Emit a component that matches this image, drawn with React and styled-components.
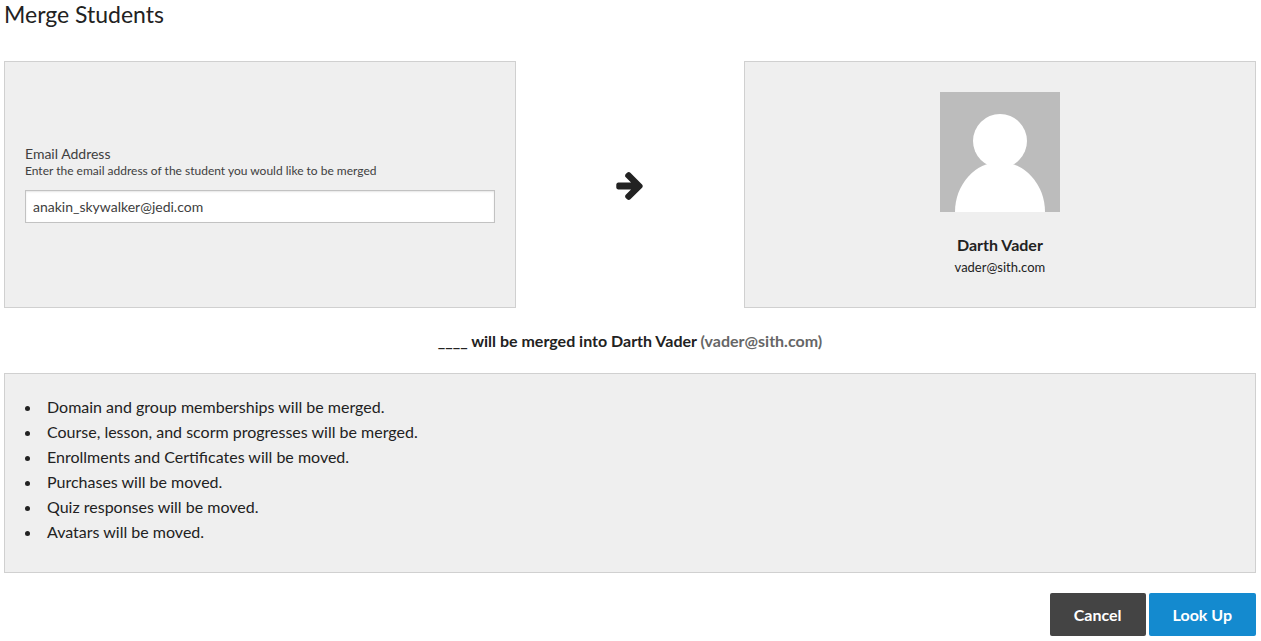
import React, { useState } from 'react';
import styled, { createGlobalStyle } from 'styled-components';

const panelBg = '#efefef';
const panelBorder = '#d0d0d0';
const inputBorder = '#c2c2c2';
const textColor = '#222222';

const GlobalStyle = createGlobalStyle`
  *, *::before, *::after {
    box-sizing: border-box;
  }

  body {
    margin: 0;
    background: #ffffff;
    color: ${textColor};
    font-family: Lato, 'Liberation Sans', sans-serif;
    font-size: 16px;
  }
`;

const Page = styled.main`
  padding: 0 5px 5px 4px;
`;

const Title = styled.h1`
  margin: 0 0 33px;
  font-size: 23px;
  font-weight: 400;
  line-height: 28px;
`;

const MergeRow = styled.div`
  display: grid;
  grid-template-columns: 9fr 4fr 9fr;
`;

const Panel = styled.section`
  background: ${panelBg};
  border: 1px solid ${panelBorder};
`;

const SourcePanel = styled(Panel)`
  display: flex;
  flex-direction: column;
  justify-content: center;
  padding: 20px 20px 22px;
`;

const Label = styled.label`
  color: #404040;
  font-size: 14px;
  line-height: 18px;
`;

const Hint = styled.p`
  margin: 0 0 11px;
  color: #404040;
  font-size: 12px;
  line-height: 16px;
`;

const EmailInput = styled.input`
  width: 100%;
  height: 33px;
  padding: 0 7px;
  border: 1px solid ${inputBorder};
  border-radius: 0;
  box-shadow: inset 0 1px 2px rgba(0, 0, 0, 0.1);
  background: #ffffff;
  color: #404040;
  font-family: inherit;
  font-size: 14px;
`;

const ArrowCell = styled.div`
  display: flex;
  align-items: center;
  justify-content: center;
  padding-top: 2px;
`;

const ArrowIcon = styled.svg`
  width: 27px;
  height: 28px;
  fill: currentColor;
`;

const TargetPanel = styled(Panel)`
  display: flex;
  flex-direction: column;
  align-items: center;
  padding: 30px 20px 31px;
`;

const Avatar = styled.svg`
  display: block;
  width: 120px;
  height: 120px;
  margin-bottom: 20px;
`;

const StudentName = styled.strong`
  font-size: 16px;
  line-height: 26px;
`;

const StudentEmail = styled.span`
  font-size: 13px;
  line-height: 18px;
`;

const Summary = styled.p`
  margin: 20px 0;
  font-size: 16px;
  font-weight: 700;
  line-height: 25px;
  text-align: center;
`;

const Muted = styled.span`
  color: #666666;
`;

const Effects = styled.ul`
  margin: 0 0 20px;
  padding: 20px 20px 28px 37px;
  background: ${panelBg};
  border: 1px solid ${panelBorder};
  font-size: 16px;
  line-height: 25px;
`;

const Effect = styled.li`
  padding-left: 5px;
`;

const Actions = styled.div`
  display: flex;
  justify-content: flex-end;
  gap: 3px;
`;

const Button = styled.button`
  height: 43px;
  padding: 0 24px;
  border: 0;
  border-radius: 2px;
  background: ${({ $primary }) => ($primary ? '#148acf' : '#444444')};
  color: #ffffff;
  font-family: inherit;
  font-size: 16px;
  font-weight: 700;
  cursor: pointer;
`;

const effects = [
  'Domain and group memberships will be merged.',
  'Course, lesson, and scorm progresses will be merged.',
  'Enrollments and Certificates will be moved.',
  'Purchases will be moved.',
  'Quiz responses will be moved.',
  'Avatars will be moved.',
];

const App = () => {
  const [email, setEmail] = useState('anakin_skywalker@jedi.com');

  return (
    <>
      <GlobalStyle />
      <Page>
        <Title>Merge Students</Title>
        <MergeRow>
          <SourcePanel>
            <Label htmlFor="email">Email Address</Label>
            <Hint id="email-hint">Enter the email address of the student you would like to be merged</Hint>
            <EmailInput
              id="email"
              type="text"
              value={email}
              onChange={(e) => setEmail(e.target.value)}
              aria-describedby="email-hint"
            />
          </SourcePanel>
          <ArrowCell>
            <ArrowIcon viewBox="0 181 1472 1558" aria-hidden="true">
              <path d="M1472 960q0 54-37 91l-651 651q-39 37-91 37-51 0-90-37l-75-75q-38-38-38-91t38-91l293-293h-704q-52 0-84.5-37.5t-32.5-90.5v-128q0-53 32.5-90.5t84.5-37.5h704l-293-294q-38-36-38-90t38-90l75-75q38-38 90-38 53 0 91 38l651 651q37 35 37 90z" />
            </ArrowIcon>
          </ArrowCell>
          <TargetPanel>
            <Avatar viewBox="0 0 120 120" role="img" aria-label="Darth Vader">
              <rect width="120" height="120" fill="#bcbcbc" />
              <circle cx="60" cy="49" r="27" fill="#ffffff" />
              <ellipse cx="60" cy="120" rx="45" ry="50" fill="#ffffff" />
            </Avatar>
            <StudentName>Darth Vader</StudentName>
            <StudentEmail>vader@sith.com</StudentEmail>
          </TargetPanel>
        </MergeRow>
        <Summary>
          ____ will be merged into Darth Vader <Muted>(vader@sith.com)</Muted>
        </Summary>
        <Effects>
          {effects.map((effect) => <Effect key={effect}>{effect}</Effect>)}
        </Effects>
        <Actions>
          <Button type="button">Cancel</Button>
          <Button type="button" $primary>Look Up</Button>
        </Actions>
      </Page>
    </>
  );
};

export default App;
